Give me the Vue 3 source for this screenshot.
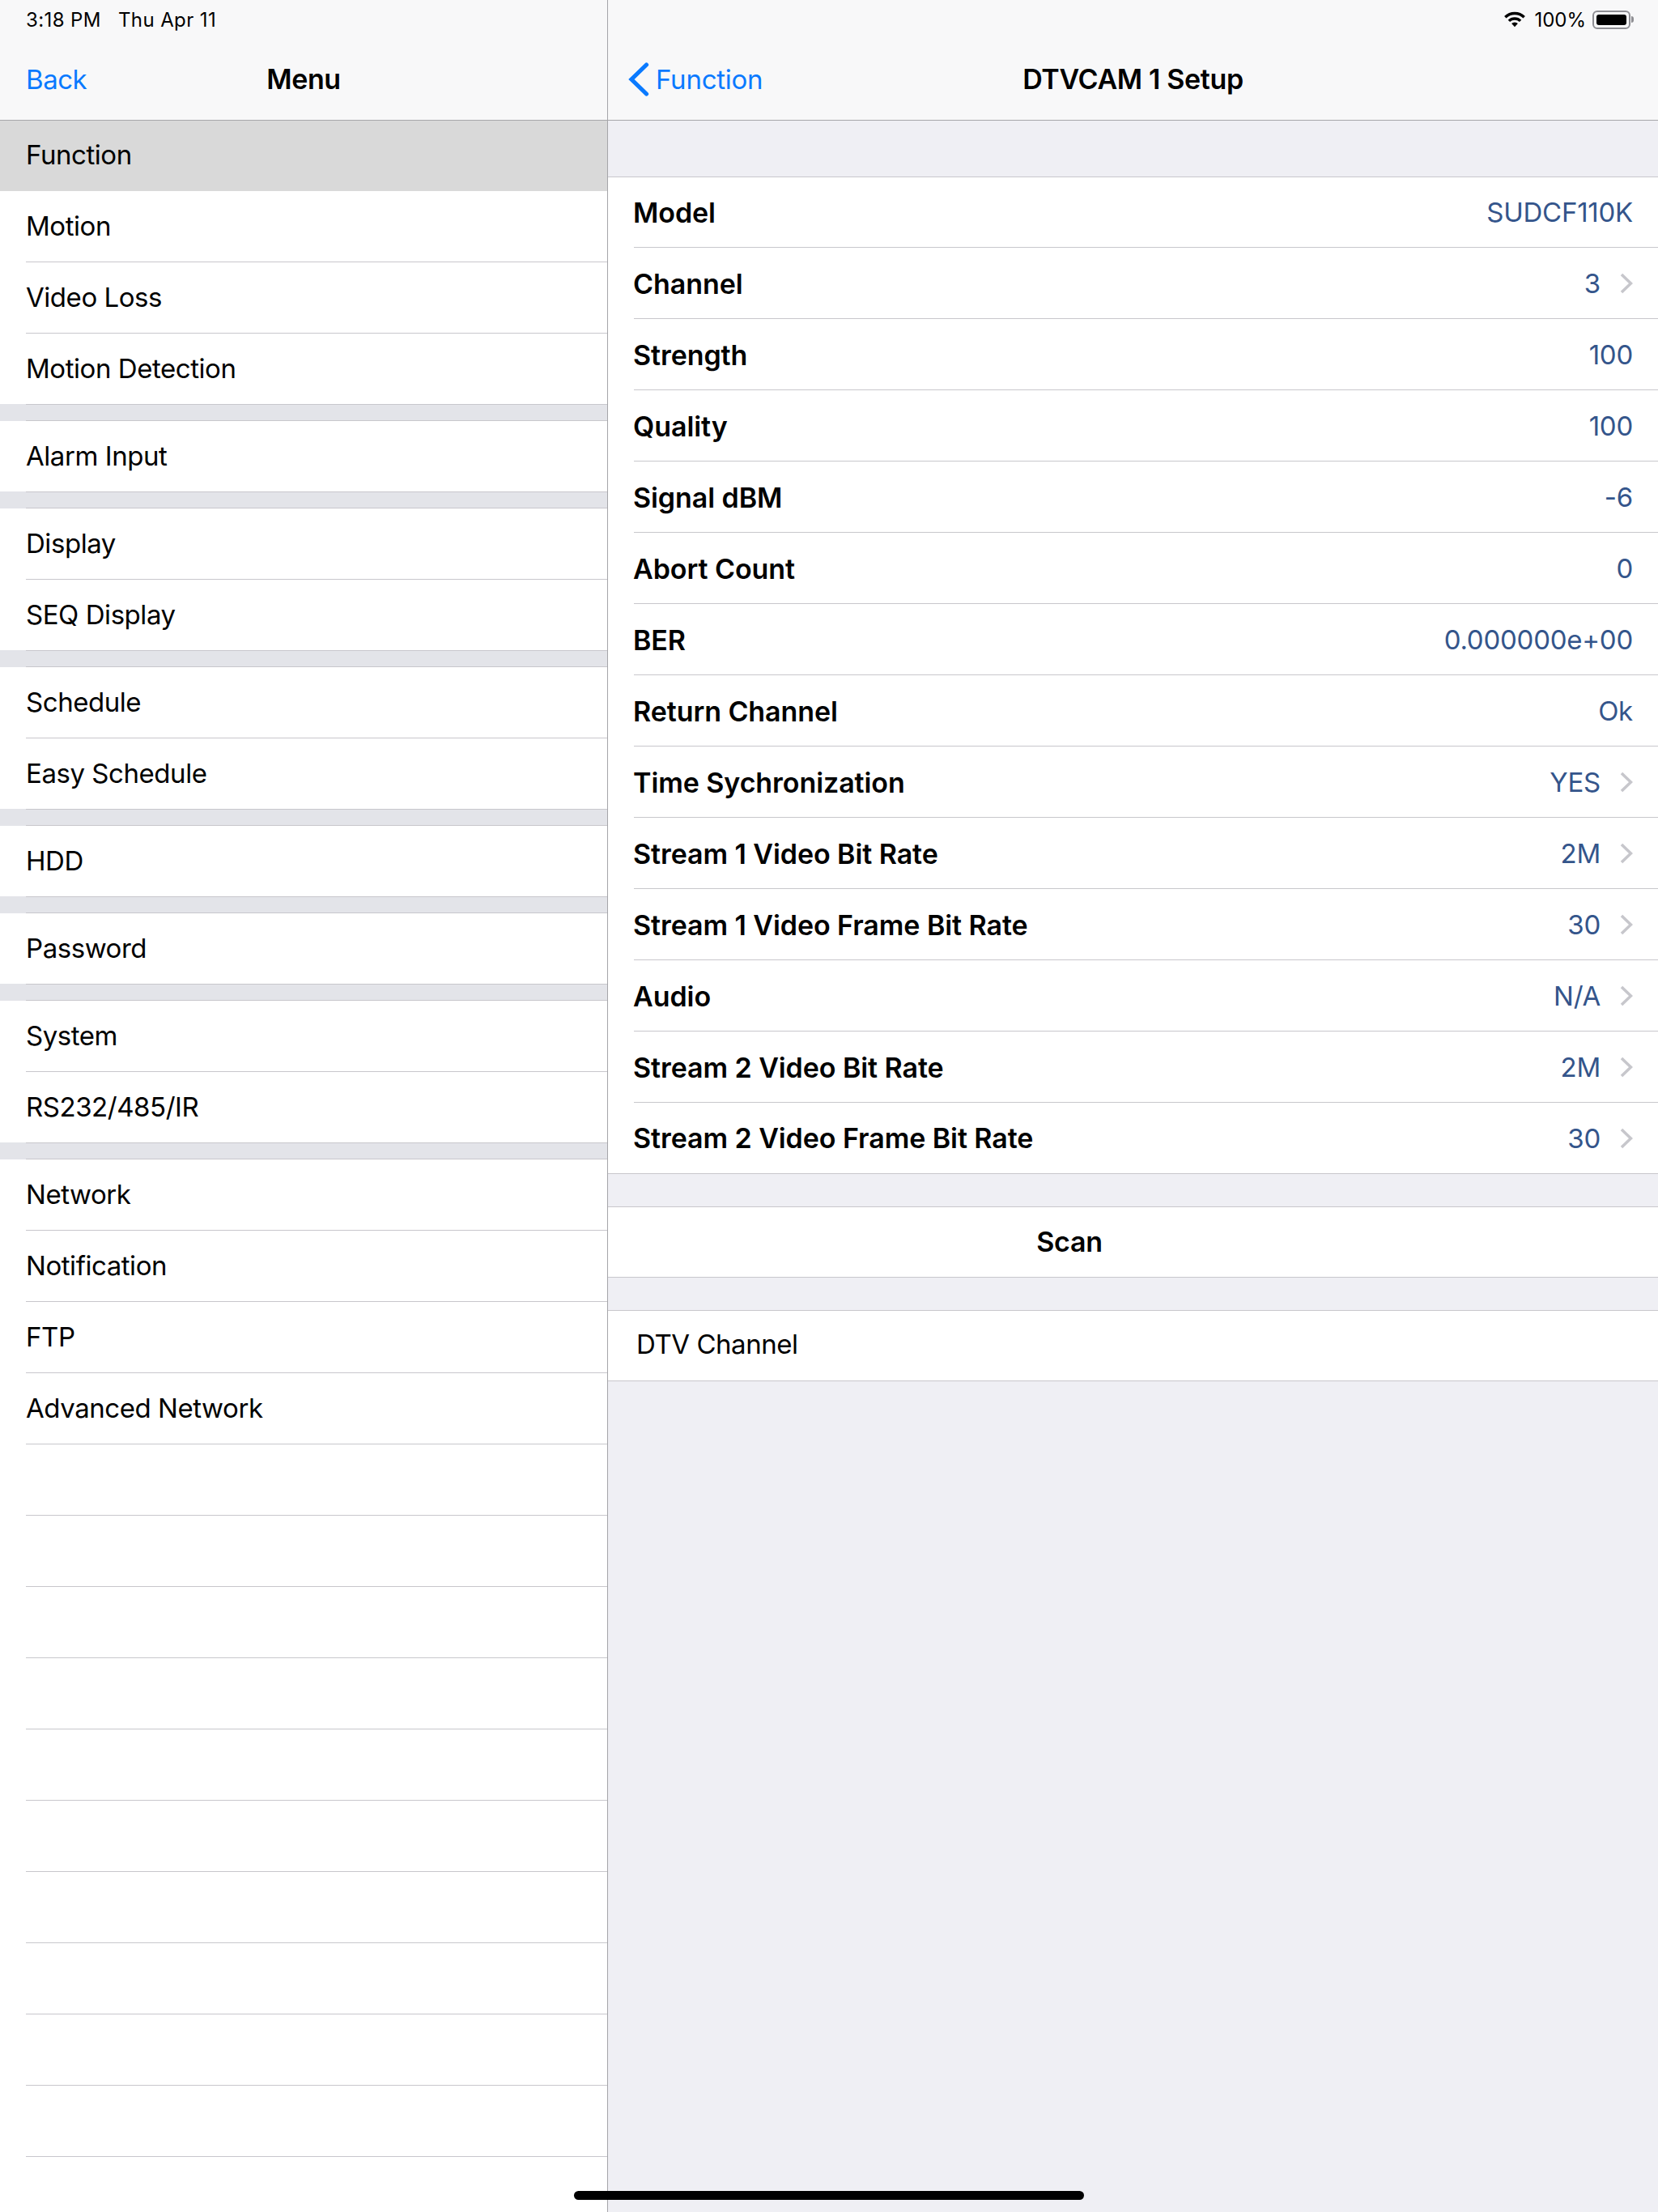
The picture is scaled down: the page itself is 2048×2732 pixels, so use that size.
<template>
  <div class="page">
    <aside class="side">
      <header class="nav">
        <div class="status"><span>3:18 PM</span><span>Thu Apr 11</span></div>
        <div class="bar">
          <span class="link back">Back</span>
          <span class="title">Menu</span>
        </div>
      </header>
      <div class="menu">
        <template v-for="(group, g) in menu" :key="g">
          <div class="group">
            <div
              v-for="item in group"
              :key="item"
              class="row"
              :class="{ selected: item === 'Function' }"
            >{{ item }}</div>
          </div>
          <div v-if="g < menu.length - 1" class="gap"></div>
        </template>
        <div class="group">
          <div v-for="n in 11" :key="n" class="row"></div>
        </div>
      </div>
    </aside>

    <main class="detail">
      <header class="nav">
        <div class="status right">
          <svg class="wifi" width="28" height="20" viewBox="0 0 28 20">
            <path d="M2.3 7.3a16.5 16.5 0 0 1 23.4 0" fill="none" stroke="#000" stroke-width="3.4" />
            <path d="M6.9 11.9a10 10 0 0 1 14.2 0" fill="none" stroke="#000" stroke-width="3.4" />
            <path d="M10.1 15.1a5.5 5.5 0 0 1 7.8 0L14 19.2z" fill="#000" />
          </svg>
          <span class="pct">100%</span>
          <span class="battery"><i></i></span>
          <span class="nub"></span>
        </div>
        <div class="bar">
          <span class="link fn">
            <svg width="26" height="44" viewBox="0 0 26 44">
              <path
                d="M22.5 4L4 22l18.5 18"
                fill="none"
                stroke="#0a7aff"
                stroke-width="5.2"
                stroke-linecap="round"
              />
            </svg>
            Function
          </span>
          <span class="title">DTVCAM 1 Setup</span>
        </div>
      </header>

      <div class="band"></div>
      <div class="table">
        <div v-for="row in rows" :key="row.label" class="cell">
          <span class="label">{{ row.label }}</span>
          <span class="value">{{ row.value }}</span>
          <svg v-if="row.more" class="chev" width="16" height="26" viewBox="0 0 16 26">
            <path d="M2 2l11.5 11L2 24" fill="none" stroke="#c7c7cc" stroke-width="3.6" />
          </svg>
        </div>
      </div>
      <div class="space"></div>
      <div class="block scan">Scan</div>
      <div class="space"></div>
      <div class="block dtv">DTV Channel</div>
    </main>

    <div class="home"></div>
  </div>
</template>

<script setup>
const menu = [
  ['Function', 'Motion', 'Video Loss', 'Motion Detection'],
  ['Alarm Input'],
  ['Display', 'SEQ Display'],
  ['Schedule', 'Easy Schedule'],
  ['HDD'],
  ['Password'],
  ['System', 'RS232/485/IR'],
  ['Network', 'Notification', 'FTP', 'Advanced Network']
];

const rows = [
  { label: 'Model', value: 'SUDCF110K' },
  { label: 'Channel', value: '3', more: true },
  { label: 'Strength', value: '100' },
  { label: 'Quality', value: '100' },
  { label: 'Signal dBM', value: '-6' },
  { label: 'Abort Count', value: '0' },
  { label: 'BER', value: '0.000000e+00' },
  { label: 'Return Channel', value: 'Ok' },
  { label: 'Time Sychronization', value: 'YES', more: true },
  { label: 'Stream 1 Video Bit Rate', value: '2M', more: true },
  { label: 'Stream 1 Video Frame Bit Rate', value: '30', more: true },
  { label: 'Audio', value: 'N/A', more: true },
  { label: 'Stream 2 Video Bit Rate', value: '2M', more: true },
  { label: 'Stream 2 Video Frame Bit Rate', value: '30', more: true }
];
</script>

<style scoped>
.page {
  position: relative;
  display: flex;
  width: 2048px;
  height: 2732px;
  overflow: hidden;
  font-family: Inter, "Liberation Sans", sans-serif;
  font-size: 33px;
  letter-spacing: -0.45px;
  color: #000;
  background: #efeff4;
}

.side {
  flex: 0 0 751px;
  box-sizing: border-box;
  border-right: 1px solid #a5a5a9;
  background: #fff;
  overflow: hidden;
}

.detail {
  flex: 1;
  min-width: 0;
}

/* ===== nav ===== */

.nav {
  box-sizing: border-box;
  height: 149px;
  background: #f8f8f9;
  border-bottom: 1px solid #a7a7aa;
}

.status {
  display: flex;
  gap: 21px;
  align-items: center;
  height: 48px;
  padding-left: 32px;
  font-size: 24px;
  letter-spacing: 0.4px;
}

.status.right {
  justify-content: flex-end;
  gap: 0;
  padding: 0 30px 0 0;
}

.wifi {
  margin-right: 10px;
}

.pct {
  margin-right: 8px;
  letter-spacing: 0;
}

.battery {
  box-sizing: border-box;
  display: block;
  width: 47px;
  height: 23px;
  padding: 3px;
  border: 2px solid #8e8e93;
  border-radius: 6px;
}

.battery i {
  display: block;
  height: 100%;
  background: #000;
  border-radius: 3px;
}

.nub {
  width: 3px;
  height: 8px;
  margin-left: 1px;
  background: #8e8e93;
  border-radius: 0 3px 3px 0;
}

.bar {
  position: relative;
  display: flex;
  align-items: center;
  justify-content: center;
  height: 99px;
}

.link {
  color: #0a7aff;
}

.back {
  position: absolute;
  left: 32px;
}

.fn {
  position: absolute;
  left: 25px;
  display: flex;
  align-items: center;
  gap: 8px;
  letter-spacing: -0.25px;
}

.title {
  font-size: 34px;
  font-weight: 600;
  letter-spacing: -0.35px;
}

/* ===== left menu ===== */

.row {
  box-sizing: border-box;
  height: 88px;
  padding-left: 32px;
  line-height: 86px;
  background: linear-gradient(#c8c7cc, #c8c7cc) 32px 100% / 100% 1px no-repeat #fff;
}

.group:has(+ .gap) .row:last-child {
  background:
    linear-gradient(#e3e4e9, #e3e4e9) 0 100% / 32px 1px no-repeat,
    linear-gradient(#c8c7cc, #c8c7cc) 32px 100% / 100% 1px no-repeat #fff;
}

.row.selected {
  height: 87px;
  line-height: 84px;
  background: #d9d9d9;
}

.gap {
  height: 20px;
  background: linear-gradient(#c8c7cc, #c8c7cc) 32px 100% / 100% 1px no-repeat #e3e4e9;
}

/* ===== right table ===== */

.band {
  box-sizing: border-box;
  height: 70px;
  border-bottom: 1px solid #c8c7cc;
}

.table {
  background: #fff;
}

.cell {
  box-sizing: border-box;
  display: flex;
  align-items: center;
  height: 88px;
  padding: 0 31px 0 31px;
  background: linear-gradient(#c8c7cc, #c8c7cc) 32px 100% / 100% 1px no-repeat #fff;
}

.cell:first-child {
  height: 87px;
  padding-bottom: 1px;
}

.cell:last-child {
  background: #fff;
  border-bottom: 1px solid #c8c7cc;
}

.label {
  flex: 1;
  font-size: 34px;
  font-weight: 600;
  letter-spacing: -0.07px;
}

.value {
  color: #34558b;
  letter-spacing: -0.25px;
}

.chev {
  margin-left: 24px;
}

.space {
  box-sizing: border-box;
  height: 41px;
  border-bottom: 1px solid #c8c7cc;
}

.block {
  box-sizing: border-box;
  height: 87px;
  line-height: 86px;
  background: #fff;
  border-bottom: 1px solid #c8c7cc;
}

.scan {
  padding-right: 157px;
  font-size: 34px;
  text-align: center;
  font-weight: 600;
  letter-spacing: -0.25px;
}

.dtv {
  padding-left: 35px;
  line-height: 82px;
}

.home {
  position: absolute;
  left: 709px;
  bottom: 15px;
  width: 630px;
  height: 11px;
  background: #000;
  border-radius: 6px;
}
</style>
